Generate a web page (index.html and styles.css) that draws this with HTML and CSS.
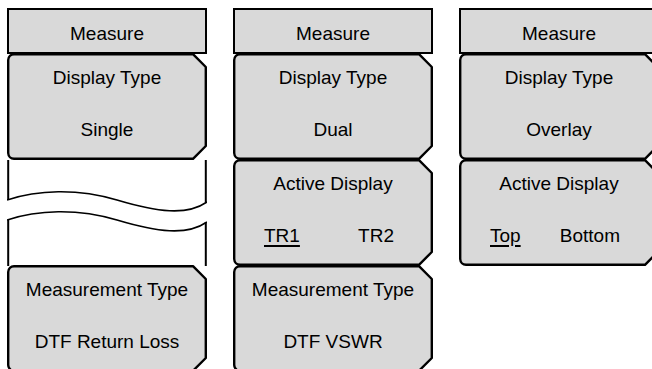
FILE: index.html
```html
<!DOCTYPE html>
<html lang="en">

<head>
  <meta charset="utf8">
  <title>Measure menus</title>
  <link rel="stylesheet" href="styles.css">
</head>

<body>
  <div class="menus">

    <!-- Single -->
    <div class="menu">
      <div class="menu-title">Measure</div>
      <div class="key">
        <svg class="key-shape" width="200" height="107" viewBox="0 0 200 107">
          <path d="M7 1.2 H186 L198.8 14 V93 L186 105.8 H7 A6 6 0 0 1 1.2 100 V7 A6 6 0 0 1 7 1.2 Z" />
        </svg>
        <div class="key-label">Display Type</div>
        <div class="key-value">Single</div>
      </div>
      <div class="gap">
        <svg width="200" height="106" viewBox="0 0 200 106">
          <path class="side" d="M1.2 0 V40 M198.8 0 V42 M1.2 60 V106 M198.8 62 V106" />
          <path class="wave" d="M0 40 C30 30 70 28 110 40 S180 56 200 42" />
          <path class="wave" d="M0 60 C30 50 70 48 110 60 S180 76 200 62" />
        </svg>
      </div>
      <div class="key">
        <svg class="key-shape" width="200" height="107" viewBox="0 0 200 107">
          <path d="M7 1.2 H186 L198.8 14 V93 L186 105.8 H7 A6 6 0 0 1 1.2 100 V7 A6 6 0 0 1 7 1.2 Z" />
        </svg>
        <div class="key-label">Measurement Type</div>
        <div class="key-value">DTF Return Loss</div>
      </div>
    </div>

    <!-- Dual -->
    <div class="menu">
      <div class="menu-title">Measure</div>
      <div class="key">
        <svg class="key-shape" width="200" height="107" viewBox="0 0 200 107">
          <path d="M7 1.2 H186 L198.8 14 V93 L186 105.8 H7 A6 6 0 0 1 1.2 100 V7 A6 6 0 0 1 7 1.2 Z" />
        </svg>
        <div class="key-label">Display Type</div>
        <div class="key-value">Dual</div>
      </div>
      <div class="key">
        <svg class="key-shape" width="200" height="107" viewBox="0 0 200 107">
          <path d="M7 1.2 H186 L198.8 14 V93 L186 105.8 H7 A6 6 0 0 1 1.2 100 V7 A6 6 0 0 1 7 1.2 Z" />
        </svg>
        <div class="key-label">Active Display</div>
        <div class="key-value pair">
          <span class="on">TR1</span>
          <span>TR2</span>
        </div>
      </div>
      <div class="key">
        <svg class="key-shape" width="200" height="107" viewBox="0 0 200 107">
          <path d="M7 1.2 H186 L198.8 14 V93 L186 105.8 H7 A6 6 0 0 1 1.2 100 V7 A6 6 0 0 1 7 1.2 Z" />
        </svg>
        <div class="key-label">Measurement Type</div>
        <div class="key-value">DTF VSWR</div>
      </div>
    </div>

    <!-- Overlay -->
    <div class="menu">
      <div class="menu-title">Measure</div>
      <div class="key">
        <svg class="key-shape" width="200" height="107" viewBox="0 0 200 107">
          <path d="M7 1.2 H186 L198.8 14 V93 L186 105.8 H7 A6 6 0 0 1 1.2 100 V7 A6 6 0 0 1 7 1.2 Z" />
        </svg>
        <div class="key-label">Display Type</div>
        <div class="key-value">Overlay</div>
      </div>
      <div class="key">
        <svg class="key-shape" width="200" height="107" viewBox="0 0 200 107">
          <path d="M7 1.2 H186 L198.8 14 V93 L186 105.8 H7 A6 6 0 0 1 1.2 100 V7 A6 6 0 0 1 7 1.2 Z" />
        </svg>
        <div class="key-label">Active Display</div>
        <div class="key-value pair">
          <span class="on">Top</span>
          <span>Bottom</span>
        </div>
      </div>
    </div>

  </div>
</body>

</html>
```

FILE: styles.css
```css
html,
body {
  margin: 0;
  height: 100%;
  background: #fff;
  overflow: hidden;
}

body {
  font-family: 'Liberation Sans', Arial, sans-serif;
  font-size: 19px;
  line-height: 22px;
  color: #000;
}

.menus {
  display: flex;
  gap: 26px;
  height: 100%;
  box-sizing: border-box;
  padding: 8px 0 0 7px;
  overflow: hidden;
}

.menu {
  width: 200px;
  flex-shrink: 0;
  display: flex;
  flex-direction: column;
}

.menu-title {
  height: 46px;
  flex-shrink: 0;
  box-sizing: border-box;
  padding-top: 13px;
  border: 2px solid #000;
  background: #d9d9d9;
  text-align: center;
}

.key {
  position: relative;
  height: 107px;
  flex-shrink: 0;
  margin-top: -1px;
  box-sizing: border-box;
  padding-top: 14px;
  text-align: center;
}

.key-shape {
  position: absolute;
  top: 0;
  left: 0;
}

.key-shape path {
  fill: #d9d9d9;
  stroke: #000;
  stroke-width: 2.4;
  stroke-linejoin: round;
}

.key-label,
.key-value {
  position: relative;
}

.key-value {
  margin-top: 30px;
}

.pair {
  display: flex;
  justify-content: space-between;
  padding: 0 39px 0 31px;
}

.pair .on {
  text-decoration: underline;
  text-decoration-thickness: 1.5px;
  text-underline-offset: 3px;
}

.gap {
  height: 106px;
  flex-shrink: 0;
}

.gap svg {
  display: block;
}

.gap path {
  fill: none;
  stroke: #000;
}

.gap .side {
  stroke-width: 2;
}

.gap .wave {
  stroke-width: 1.6;
}
```
